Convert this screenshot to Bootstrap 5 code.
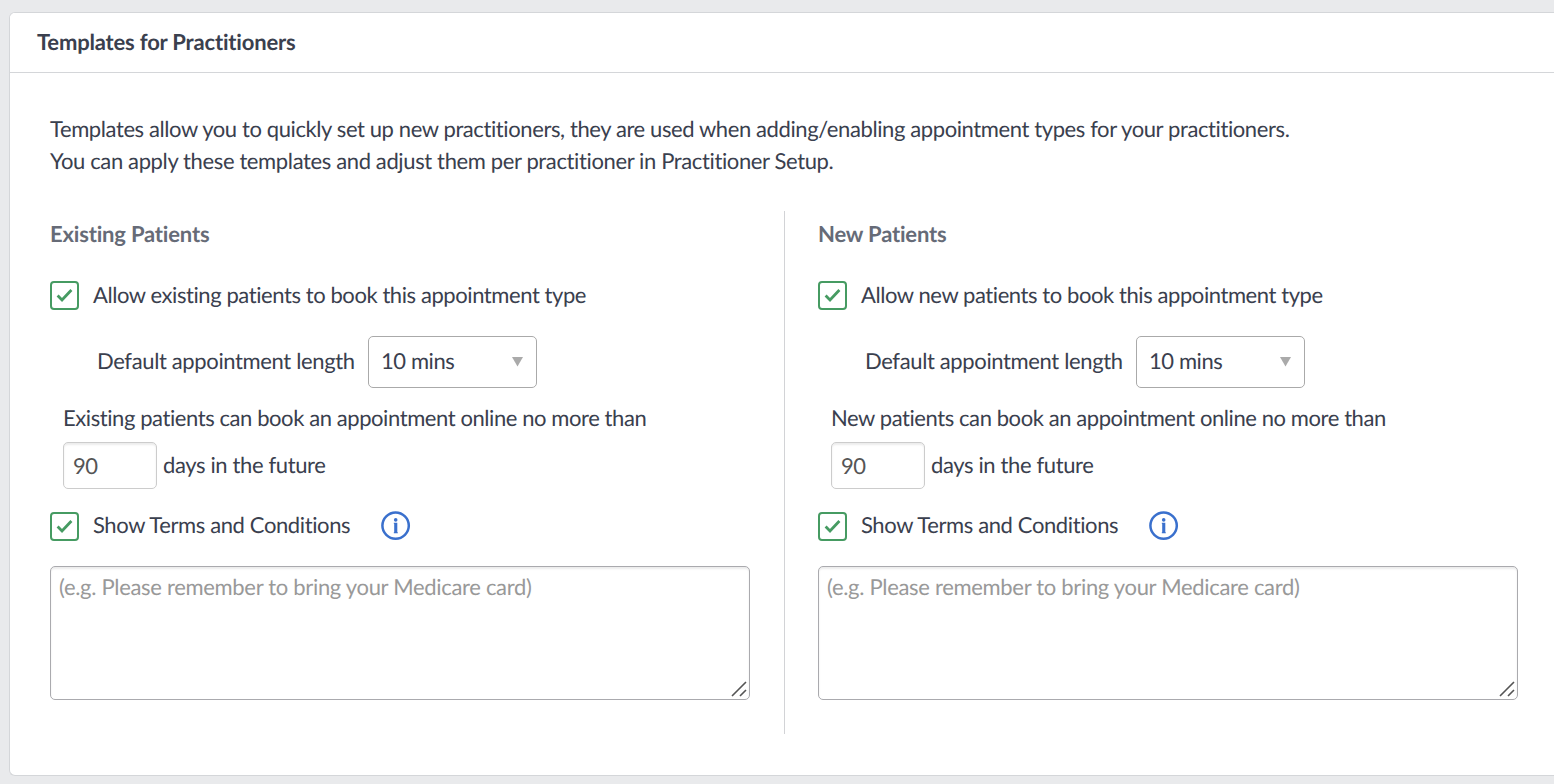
<!DOCTYPE html>
<html lang="en">
<head>
    <meta charset="UTF-8">
    <meta name="viewport" content="width=device-width, initial-scale=1">
    <link rel="stylesheet" href="https://cdn.jsdelivr.net/npm/bootstrap@5.3.0/dist/css/bootstrap.min.css">
    <style>
        body {
            background: #e9eaec;
            color: #3a404e;
            font-family: Lato, "Liberation Sans", sans-serif;
            font-size: 22px;
            line-height: 32px;
            letter-spacing: -.42px;
            font-variant-ligatures: none;
            text-rendering: geometricPrecision;
            overflow: hidden;
        }
        input, textarea {
            font-variant-ligatures: none;
            text-rendering: geometricPrecision;
        }
        .panel {
            height: 764px;
            margin: 12px 0 0 9px;
            border: 1px solid #d4d6d9;
            border-right: 0;
            border-radius: 6px 0 0 6px;
        }
        .panel .card-header {
            height: 60px;
            padding: 13px 27px;
            background: #fff;
            border-bottom: 1px solid #d4d6d9;
        }
        .panel .card-body {
            padding: 40px 36px 41px 40px;
        }
        .panel-title, .template-col h2 {
            font-size: 22px;
            line-height: 32px;
            letter-spacing: -.18px;
        }
        .panel-title {
            color: #3a404e;
        }
        .intro-first {
            letter-spacing: -.395px;
        }
        .intro-more {
            letter-spacing: -.37px;
        }
        .template-cols {
            margin-top: 34px;
        }
        .template-col {
            height: 523px;
            padding-top: 7px;
        }
        .template-col:first-child {
            width: 735px;
            padding-right: 34px;
            border-right: 1px solid #d2d3d6;
        }
        .template-col:last-child {
            width: 733px;
            padding-left: 33px;
        }
        .template-col h2 {
            color: #666b77;
        }
        .check-row {
            height: 32px;
            gap: 14px;
            margin-top: 29px;
        }
        .terms-row {
            margin-top: 21px;
        }
        .terms-row span {
            margin-bottom: 2px;
        }
        .tick-box {
            width: 29px;
            height: 29px;
            flex: none;
        }
        .tick-box path {
            filter: drop-shadow(1px 3px 1.5px rgba(0, 0, 0, .3));
        }
        .length-row {
            margin: 25px 0 14px 47px;
            height: 52px;
        }
        .length-label {
            width: 271px;
            margin-bottom: 2px;
            letter-spacing: -.36px;
        }
        .length-select {
            width: 169px;
            height: 52px;
            padding: 0 12px;
            border: 1px solid #aaa;
            border-radius: 5px;
            background: #fff;
        }
        .length-select span {
            margin-bottom: 2px;
        }
        .limit-block {
            padding-left: 13px;
        }
        .days-input {
            width: 94px;
            height: 47px;
            padding: 0 9px;
            font-size: 22px;
            letter-spacing: -.6px;
            color: #555;
            border: 1px solid #ccc;
            border-radius: 5px;
            box-shadow: inset 0 2px 2px rgba(0, 0, 0, .075);
        }
        .days-label {
            margin: 0 0 2px 6px;
            letter-spacing: -.37px;
        }
        .terms-label {
            width: 257px;
            letter-spacing: -.38px;
        }
        .info-icon {
            width: 30px;
            height: 30px;
            margin-left: 17px;
        }
        .terms-text {
            height: 134px;
            padding: 4px 8px;
            font-size: 22px;
            line-height: 32px;
            letter-spacing: -.31px;
            border: 1px solid #aaaaae;
            border-radius: 5px;
            box-shadow: inset 0 2px 2px rgba(0, 0, 0, .075);
            resize: none;
        }
        .terms-text::placeholder {
            color: #999;
        }
        .grip {
            position: absolute;
            right: 3px;
            bottom: 3px;
            width: 16px;
            height: 16px;
        }
    </style>
    <title>Templates for Practitioners</title>
</head>
<body>

    <!-- shared icons -->
    <svg class="d-none">
        <symbol id="tick" viewBox="0 0 29 29">
            <rect x="1" y="1" width="27" height="27" rx="3" fill="#fff" stroke="#469b62" stroke-width="2"/>
            <path d="M7.6 14.6 12 19 21.4 9" fill="none" stroke="#469b62" stroke-width="2.8"/>
        </symbol>
        <symbol id="info" viewBox="0 0 30 30">
            <circle cx="14.6" cy="14.6" r="13.2" fill="#fff" stroke="#3a70cd" stroke-width="2.5"/>
            <circle cx="14.7" cy="8.9" r="1.8" fill="#3a70cd"/>
            <path d="M12.8 11.7h3.5v9.5h.5v1h-4v-1h.4v-8.5h-.4z" fill="#3a70cd"/>
        </symbol>
        <symbol id="grip" viewBox="0 0 16 16">
            <path d="M1 15 15 1M9 15l6-6" fill="none" stroke="#555" stroke-width="1.6"/>
        </symbol>
    </svg>

    <div class="card panel">
        <div class="card-header">
            <h1 class="panel-title fw-bold mb-0">Templates for Practitioners</h1>
        </div>
        <div class="card-body">
            <div class="intro-first">Templates allow you to quickly set up new practitioners, they are used when adding/enabling appointment types for your practitioners.</div>
            <div class="intro-more">You can apply these templates and adjust them per practitioner in Practitioner Setup.</div>

            <div class="template-cols d-flex">
                <div class="template-col">
                    <h2 class="fw-bold mb-0">Existing Patients</h2>
                    <div class="check-row d-flex align-items-center">
                        <svg class="tick-box"><use href="#tick"/></svg>
                        <span>Allow existing patients to book this appointment type</span>
                    </div>
                    <div class="length-row d-flex align-items-center">
                        <span class="length-label">Default appointment length</span>
                        <div class="length-select d-flex align-items-center justify-content-between">
                            <span>10 mins</span>
                            <svg width="12" height="10"><path d="M0 0h11L5.5 9.5z" fill="#aaa"/></svg>
                        </div>
                    </div>
                    <div class="limit-block">
                        <div>Existing patients can book an appointment online no more than</div>
                        <div class="d-flex align-items-center mt-2">
                            <input type="text" class="days-input" value="90">
                            <span class="days-label">days in the future</span>
                        </div>
                    </div>
                    <div class="check-row terms-row d-flex align-items-center">
                        <svg class="tick-box"><use href="#tick"/></svg>
                        <span class="terms-label text-nowrap">Show Terms and Conditions</span>
                        <svg class="info-icon"><use href="#info"/></svg>
                    </div>
                    <div class="position-relative mt-4">
                        <textarea class="form-control terms-text" placeholder="(e.g. Please remember to bring your Medicare card)"></textarea>
                        <svg class="grip"><use href="#grip"/></svg>
                    </div>
                </div>

                <div class="template-col">
                    <h2 class="fw-bold mb-0">New Patients</h2>
                    <div class="check-row d-flex align-items-center">
                        <svg class="tick-box"><use href="#tick"/></svg>
                        <span>Allow new patients to book this appointment type</span>
                    </div>
                    <div class="length-row d-flex align-items-center">
                        <span class="length-label">Default appointment length</span>
                        <div class="length-select d-flex align-items-center justify-content-between">
                            <span>10 mins</span>
                            <svg width="12" height="10"><path d="M0 0h11L5.5 9.5z" fill="#aaa"/></svg>
                        </div>
                    </div>
                    <div class="limit-block">
                        <div>New patients can book an appointment online no more than</div>
                        <div class="d-flex align-items-center mt-2">
                            <input type="text" class="days-input" value="90">
                            <span class="days-label">days in the future</span>
                        </div>
                    </div>
                    <div class="check-row terms-row d-flex align-items-center">
                        <svg class="tick-box"><use href="#tick"/></svg>
                        <span class="terms-label text-nowrap">Show Terms and Conditions</span>
                        <svg class="info-icon"><use href="#info"/></svg>
                    </div>
                    <div class="position-relative mt-4">
                        <textarea class="form-control terms-text" placeholder="(e.g. Please remember to bring your Medicare card)"></textarea>
                        <svg class="grip"><use href="#grip"/></svg>
                    </div>
                </div>
            </div>
        </div>
    </div>

    <script src="https://cdn.jsdelivr.net/npm/bootstrap@5.3.0/dist/js/bootstrap.bundle.min.js"></script>
</body>
</html>
